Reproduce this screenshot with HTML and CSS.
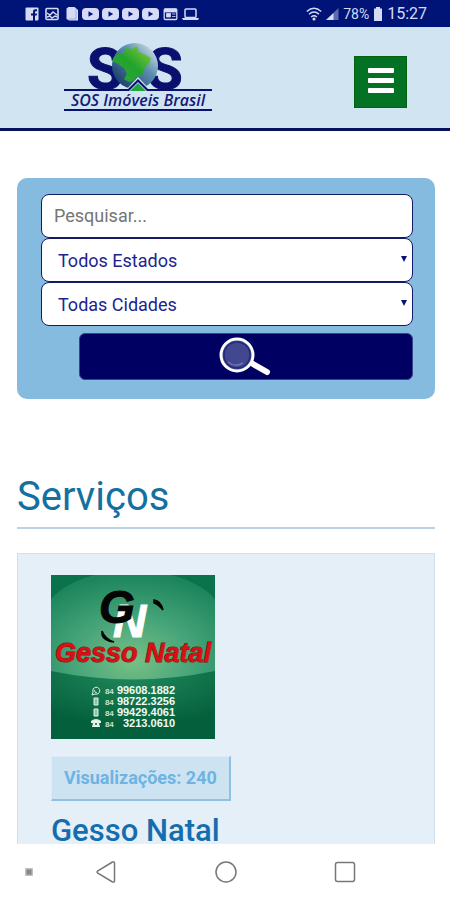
FILE: index.html
```html
<!DOCTYPE html>
<html lang="pt-BR">
<head>
<meta charset="utf-8">
<meta name="viewport" content="width=device-width, initial-scale=1">
<title>SOS Imóveis Brasil</title>
<link rel="stylesheet" href="styles.css">
</head>
<body>
<div class="status">
  <div class="status-group notices">
    <svg width="14" height="14" viewBox="0 0 14 14"><rect x=".5" y=".5" width="13" height="13" rx="1" fill="#d5daf5"/><path d="M8 14V8.500H6V6.500h2V5c0-2 1-2.700 2.500-2.700H12v2h-1c-.7 0-1 .3-1 1v1.200h2l-.3 2H10V14z" fill="#001478"/></svg>
    <svg width="14" height="14" viewBox="0 0 14 14" fill="none" stroke="#d5daf5"><rect x="1" y="1.500" width="12" height="11" rx="1" stroke-width="1.600"/><path d="M2 6l3 2 3-3 4 3M2 10l3-1 2 2 3-2 2 1" stroke-width="1.400"/></svg>
    <svg width="14" height="14" viewBox="0 0 14 14"><path d="M3.500 0h6l3.500 3v10.500H4L1.500 12V1.500z" fill="#d5daf5"/><path d="M11 2v10H3" fill="none" stroke="#8f98cf" stroke-width=".7"/></svg>
    <svg width="17" height="14" viewBox="0 0 17 14"><rect y="1" width="17" height="12" rx="4" fill="#d5daf5"/><path d="M6.500 4.300v5.400L11.200 7z" fill="#001478"/></svg>
    <svg width="17" height="14" viewBox="0 0 17 14"><rect y="1" width="17" height="12" rx="4" fill="#d5daf5"/><path d="M6.500 4.300v5.400L11.200 7z" fill="#001478"/></svg>
    <svg width="17" height="14" viewBox="0 0 17 14"><rect y="1" width="17" height="12" rx="4" fill="#d5daf5"/><path d="M6.500 4.300v5.400L11.200 7z" fill="#001478"/></svg>
    <svg width="17" height="14" viewBox="0 0 17 14"><rect y="1" width="17" height="12" rx="4" fill="#d5daf5"/><path d="M6.500 4.300v5.400L11.200 7z" fill="#001478"/></svg>
    <svg width="17" height="14" viewBox="-1.500 0 17 14"><rect x=".7" y="2" width="12.600" height="10.500" rx="1" fill="none" stroke="#d5daf5" stroke-width="1.300"/><path d="M1 2h12v3H1zM3 6.500h4v3.500H3zM8.500 7H12M8.500 9.500H12" fill="#d5daf5" stroke="#d5daf5" stroke-width=".8"/></svg>
    <svg width="17" height="14" viewBox="0 0 17 14"><rect x="3" y="2" width="11" height="8.500" rx="1" fill="none" stroke="#d5daf5" stroke-width="1.500"/><path d="M0 11h17l-1 2H1z" fill="#d5daf5"/></svg>
  </div>
  <div class="status-group system">
    <svg width="16" height="14" viewBox="0 0 16 14" fill="none" stroke="#d5daf5" stroke-width="1.500"><path d="M.8 4.500Q8-2 15.200 4.500M3 7.300Q8 2.800 13 7.300M5.200 10Q8 7.500 10.800 10"/><circle cx="8" cy="12" r=".8" fill="#d5daf5"/></svg>
    <svg width="13" height="14" viewBox="0 0 13 14"><path d="M0 13L12.500 1v12z" fill="#5e69b3"/><path d="M0 13l7.500-7v7z" fill="#d5daf5"/></svg>
    <span>78%</span>
    <svg width="10" height="14" viewBox="0 0 10 14"><path d="M3 0h4v1.500h2V14H1V1.500h2z" fill="#d5daf5"/></svg>
    <span class="clock">15:27</span>
  </div>
</div>

<header class="header">
  <a class="logo" href="#" aria-label="SOS Imóveis Brasil">
    <svg width="148" height="72" viewBox="0 0 148 72">
      <defs>
        <linearGradient id="sea" x1="1" y1="0" x2="0" y2="1"><stop offset="0" stop-color="#eef6f6"/><stop offset=".4" stop-color="#5d8fae"/><stop offset="1" stop-color="#08285e"/></linearGradient>
        <linearGradient id="land" x1="1" y1="0" x2="0" y2="1"><stop offset="0" stop-color="#8ccf3c"/><stop offset=".5" stop-color="#22a32c"/><stop offset="1" stop-color="#2cab38"/></linearGradient>
      </defs>
      <g class="logo-sos"><text x="23" y="47">S</text><text x="83" y="47">S</text></g>
      <circle cx="71" cy="24" r="23" fill="url(#sea)"/>
      <path d="M54 12l6-1 2-5 6 1 5-3 2 6 7 3 5 3-2 6-4 3-2 7-7 3-3 4-4 1-5-3 3-5-3-6-6-4-6-3 2-4z" fill="url(#land)"/>
      <path d="M60 50l14-15 14 15z" fill="#d1e4f2"/>
      <path d="M0 47h64l10-10 10 10h64v2H83l-9-9-9 9H0z" fill="#09106e"/>
      <path d="M66 49l8-8 8 8z" fill="#21a63d"/>
      <rect y="67" width="148" height="2" fill="#09106e"/>
      <text class="logo-name" x="74" y="64" text-anchor="middle">SOS Imóveis Brasil</text>
    </svg>
  </a>
  <button class="menu" type="button" aria-label="Menu"><span></span><span></span><span></span></button>
</header>

<main class="main">
  <form class="search">
    <input class="field" type="text" placeholder="Pesquisar..." aria-label="Pesquisar">
    <div class="select">
      <select class="field" aria-label="Estado"><option>Todos Estados</option></select>
    </div>
    <div class="select">
      <select class="field" aria-label="Cidade"><option>Todas Cidades</option></select>
    </div>
    <button class="go" type="button" aria-label="Buscar">
      <svg width="54" height="40" viewBox="0 0 54 40"><path d="M34 27l14 8" stroke="#fff" stroke-width="6" stroke-linecap="round"/><path d="M29 25l6 3" stroke="#fff" stroke-width="3"/><circle cx="18" cy="18" r="16" fill="#424890" stroke="#fff" stroke-width="3"/><circle cx="18" cy="18" r="13" fill="none" stroke="#252b78" stroke-width="1.500"/><path d="M9 25q7 6 15 1" fill="none" stroke="#6d74ae" stroke-width="1.500"/></svg>
    </button>
  </form>

  <h1 class="heading">Serviços</h1>

  <article class="card">
    <svg class="photo" width="164" height="164" viewBox="0 0 164 164" role="img" aria-label="Gesso Natal">
      <defs>
        <radialGradient id="glow" cx=".5" cy=".75" r=".75"><stop offset="0" stop-color="#78c085"/><stop offset=".5" stop-color="#46a479"/><stop offset="1" stop-color="#1d855c"/></radialGradient>
        <radialGradient id="base" cx=".5" cy="0" r=".8"><stop offset="0" stop-color="#218a5d"/><stop offset="1" stop-color="#04603c"/></radialGradient>
      </defs>
      <rect width="164" height="164" fill="#0b734c"/>
      <path d="M0 24Q14 8 44 0h76q30 8 44 24v90H0z" fill="url(#glow)"/>
      <path d="M0 96q82 17 164 0v68H0z" fill="url(#base)"/>
      <text class="monogram white" x="62" y="62">N</text>
      <text class="monogram" x="48" y="48">G</text>
      <path d="M103 25q7 1 9 10-5-6-9-7zM51 56q3 8 12 11-10-1-12-7z" fill="#050505" stroke="#050505" stroke-width="1.500"/>
      <text class="photo-name" x="82" y="87" text-anchor="middle">Gesso Natal</text>
      <g class="photo-phone" text-anchor="end">
        <text x="124" y="119"><tspan class="code">84</tspan> 99608.1882</text>
        <text x="124" y="130"><tspan class="code">84</tspan> 98722.3256</text>
        <text x="124" y="141"><tspan class="code">84</tspan> 99429.4061</text>
        <text x="124" y="152"><tspan class="code">84</tspan> &#160; 3213.0610</text>
      </g>
      <path d="M41 120l1-3a3.500 3.500 0 1 1 2 2zM43 115q1 3 3 3" fill="none" stroke="#e2f2e9"/>
      <path d="M43 123h4v7h-4zM43 134h4v7h-4z" fill="#8ec5aa" stroke="#e2f2e9"/>
      <path d="M40 146q5-4 10 0v2h-2l1 4h-8l1-4h-2z" fill="#e2f2e9"/><circle cx="45" cy="149" r="1" fill="#07613e"/>
    </svg>
    <span class="views">Visualizações: 240</span>
    <h2 class="title">Gesso Natal</h2>
  </article>
</main>

<nav class="android" aria-label="Navegação">
  <button class="dot" type="button" aria-label="Ocultar barra"><svg width="8" height="8"><rect x="1" y="1" width="6" height="6" fill="#888" stroke="#aaa"/></svg></button>
  <button type="button" aria-label="Voltar"><svg width="22" height="24" viewBox="0 0 22 24"><path d="M17.500 2L2.500 11q-1 1 0 2l15 9q2 .5 2-1V3q0-1.500-2-1z"/></svg></button>
  <button type="button" aria-label="Início"><svg width="24" height="24" viewBox="0 0 24 24"><circle cx="12" cy="12" r="10"/></svg></button>
  <button type="button" aria-label="Recentes"><svg width="24" height="24" viewBox="0 0 24 24"><rect x="2.500" y="2.500" width="19" height="19" rx="2"/></svg></button>
</nav>
</body>
</html>
```

FILE: styles.css
```css
* {
  box-sizing: border-box;
}

body {
  margin: 0;
  height: 100vh;
  display: flex;
  flex-direction: column;
  overflow: hidden;
  background: #fff;
  font-family: Roboto, "Liberation Sans", sans-serif;
}

svg {
  display: block;
  flex: none;
  overflow: visible;
}

button {
  padding: 0;
  border: 0;
  background: none;
}

.status {
  flex: none;
  height: 27px;
  padding: 0 23px 0 25px;
  display: flex;
  align-items: center;
  justify-content: space-between;
  background: #001478;
  color: #d5daf5;
  font-size: 14px;
}

.status-group {
  display: flex;
  align-items: center;
}

.notices {
  gap: 3px;
}

.notices svg:nth-child(-n+2) {
  margin-right: 3px;
}

.system {
  gap: 4px;
}

.clock {
  font-size: 16px;
}

.header {
  flex: none;
  height: 104px;
  padding: 0 43px 0 64px;
  display: flex;
  align-items: center;
  justify-content: space-between;
  background: #d1e4f2;
  border-bottom: 3px solid #09105c;
}

.logo-sos {
  font: bold 58px Roboto, sans-serif;
  fill: #09106e;
  stroke: #09106e;
}

.logo-name {
  font: italic 600 16px "Open Sans", sans-serif;
  fill: #141a78;
}

.menu {
  width: 53px;
  height: 52px;
  margin-top: 8px;
  padding-bottom: 3px;
  display: flex;
  flex-direction: column;
  align-items: center;
  justify-content: center;
  gap: 5px;
  background: #047224;
  border: 1px solid #056010;
}

.menu span {
  width: 26px;
  height: 5px;
  border-radius: 1px;
  background: #fff;
}

.main {
  flex: 1;
  min-height: 0;
  padding: 47px 15px 0 17px;
  overflow: hidden;
}

.search {
  padding: 16px 22px 19px 24px;
  display: flex;
  flex-direction: column;
  border-radius: 10px;
  background: #84bbde;
}

.field {
  display: block;
  width: 100%;
  height: 44px;
  padding: 0 12px 2px;
  border: 1px solid #151a66;
  border-radius: 8px;
  background: #fff;
  color: #1c2490;
  font: 400 18px Roboto, sans-serif;
  appearance: none;
}

.field::placeholder {
  color: #757575;
  opacity: 1;
}

.select {
  position: relative;
}

.select .field {
  padding: 0 16px;
}

.select::after {
  content: "";
  position: absolute;
  right: 6px;
  top: 18px;
  border: 3px solid transparent;
  border-top: 6px solid #0b1078;
  border-bottom: 0;
  pointer-events: none;
}

.go {
  height: 47px;
  margin: 7px 0 0 38px;
  display: flex;
  align-items: center;
  justify-content: center;
  border: 1px solid #3d4388;
  border-radius: 6px;
  background: #000063;
}

.heading {
  margin: 73px 0 24px;
  padding-bottom: 5px;
  border-bottom: 2px solid #bbd2e2;
  color: #14709f;
  font-size: 40px;
  line-height: 50px;
  font-weight: 400;
}

.card {
  padding: 21px 33px;
  border: 1px solid #cfdfeb;
  background: #e4eff8;
}

.monogram {
  font: italic bold 46px "Liberation Sans", sans-serif;
  fill: #050505;
  stroke: #050505;
}

.white {
  fill: #fff;
  stroke: #fff;
}

.photo-name {
  font: italic bold 27px "Liberation Sans", sans-serif;
  fill: #d90f12;
  stroke: #7a1512;
  stroke-width: 1px;
  paint-order: stroke;
}

.photo-phone {
  font: bold 11px "Liberation Sans", sans-serif;
  fill: #f0faf4;
}

.code {
  font-size: 8px;
  fill: #c5e4d4;
}

.views {
  display: inline-block;
  margin-top: 17px;
  padding: 0 12px;
  border: 1px solid #dcebf6;
  border-right: 2px solid #90c1e3;
  border-bottom: 2px solid #90c1e3;
  background: #cee3f1;
  color: #6db3e3;
  font-size: 18px;
  font-weight: 700;
  line-height: 42px;
}

.title {
  margin: 10px 0 0;
  color: #146eae;
  font-size: 31px;
  line-height: 40px;
  font-weight: 500;
}

.android {
  flex: none;
  height: 56px;
  padding: 0 45px 0 25px;
  display: flex;
  align-items: center;
  background: #fff;
}

.android button {
  flex: 1;
  display: flex;
  justify-content: center;
}

.android .dot {
  flex: 0 0 21px;
  justify-content: flex-start;
}

.android svg {
  fill: none;
  stroke: #777;
  stroke-width: 1.5px;
}
```
